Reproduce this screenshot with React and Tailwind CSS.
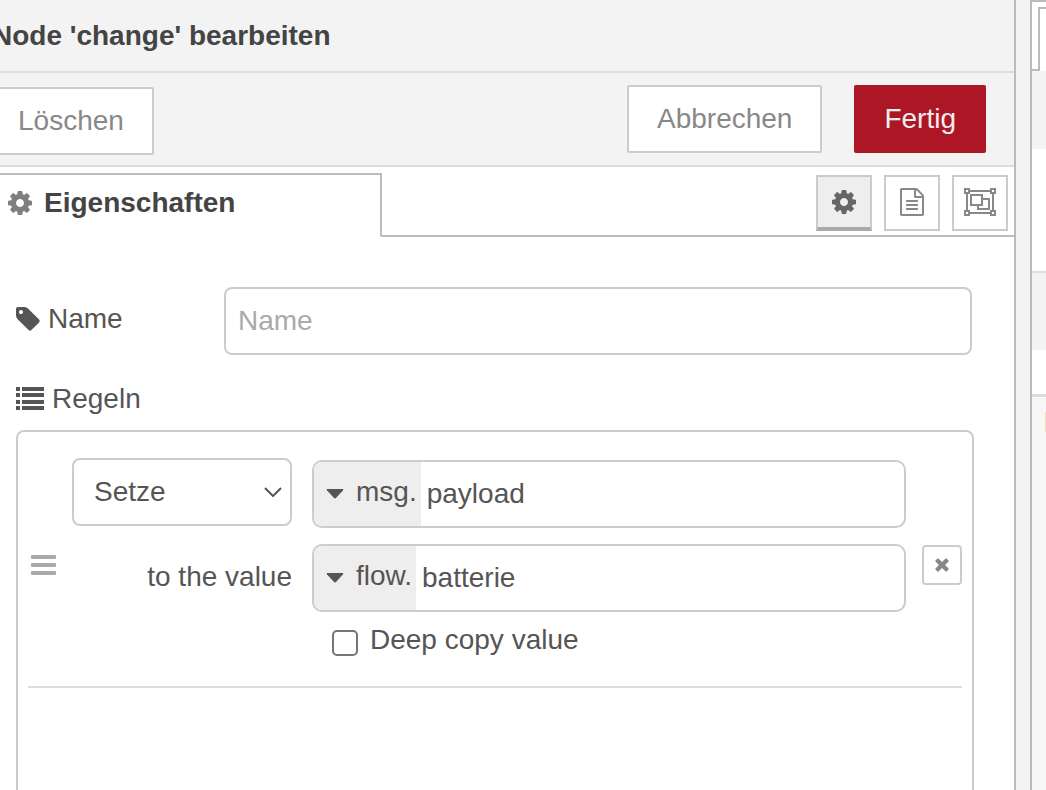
import { useState } from 'react'

const ICONS = {
  cog: {
    viewBox: '128 128 1536 1536',
    d: 'M1152 896q0-106-75-181t-181-75-181 75-75 181 75 181 181 75 181-75 75-181zm512-109v222q0 12-8 23t-20 13l-185 28q-19 54-39 91 35 50 107 138 10 12 10 25t-9 23q-27 37-99 108t-94 71q-12 0-26-9l-138-108q-44 23-91 38-16 136-29 186-7 28-36 28h-222q-14 0-24.5-8.5t-11.5-21.5l-28-184q-49-16-90-37l-141 107q-10 9-25 9-14 0-25-11-126-114-165-168-7-10-7-23 0-12 8-23 15-21 51-66.5t54-70.5q-27-50-41-99l-183-27q-13-2-21-12.5t-8-23.5v-222q0-12 8-23t19-13l186-28q14-46 39-92-40-57-107-138-10-12-10-24 0-10 9-23 26-36 98.5-107.5t94.5-71.5q13 0 26 10l138 107q44-23 91-38 16-136 29-186 7-28 36-28h222q14 0 24.5 8.5t11.5 21.5l28 184q49 16 90 37l142-107q9-9 24-9 13 0 25 10 129 119 165 170 7 8 7 22 0 12-8 23-15 21-51 66.5t-54 70.5q26 50 41 98l183 28q13 2 21 12.5t8 23.5z',
  },
  tag: {
    viewBox: '128 128 1536 1536',
    d: 'M576 448q0-53-37.5-90.5t-90.5-37.5-90.5 37.5-37.5 90.5 37.5 90.5 90.5 37.5 90.5-37.5 37.5-90.5zm1067 576q0 53-37 90l-491 492q-39 37-91 37-53 0-90-37l-715-716q-38-37-64.5-101t-26.5-117v-416q0-52 38-90t90-38h416q53 0 117 26.5t102 64.5l715 714q37 39 37 91z',
  },
  file: {
    viewBox: '0 0 1792 1792',
    d: 'M1596 380q28 28 48 76t20 88v1152q0 40-28 68t-68 28h-1344q-40 0-68-28t-28-68v-1600q0-40 28-68t68-28h896q40 0 88 20t76 48zm-444-244v376h376q-10-29-22-41l-313-313q-12-12-41-22zm384 1528v-1024h-416q-40 0-68-28t-28-68v-416h-768v1536h1280zm-1024-864q0-14 9-23t23-9h704q14 0 23 9t9 23v64q0 14-9 23t-23 9h-704q-14 0-23-9t-9-23v-64zm736 224q14 0 23 9t9 23v64q0 14-9 23t-23 9h-704q-14 0-23-9t-9-23v-64q0-14 9-23t23-9h704zm0 256q14 0 23 9t9 23v64q0 14-9 23t-23 9h-704q-14 0-23-9t-9-23v-64q0-14 9-23t23-9h704z',
  },
  times: {
    viewBox: '0 64 1792 1792',
    d: 'M1490 1322q0 40-28 68l-136 136q-28 28-68 28t-68-28l-294-294-294 294q-28 28-68 28t-68-28l-136-136q-28-28-28-68t28-68l294-294-294-294q-28-28-28-68t28-68l136-136q28-28 68-28t68 28l294 294 294-294q28-28 68-28t68 28l136 136q28 28 28 68t-28 68l-294 294 294 294q28 28 28 68z',
  },
}

function Icon({ name, className }) {
  return (
    <svg viewBox={ICONS[name].viewBox} className={className} fill="currentColor" aria-hidden="true">
      <path d={ICONS[name].d} />
    </svg>
  )
}

function ListIcon() {
  return (
    <svg viewBox="0 0 28 24" className="w-7 h-6" fill="currentColor" aria-hidden="true">
      {[0, 6, 13, 19].map(y => (
        <g key={y}>
          <rect x="0" y={y} width="4" height="4" />
          <rect x="6" y={y} width="22" height="4" />
        </g>
      ))}
    </svg>
  )
}

function GroupIcon() {
  return (
    <svg viewBox="0 0 32 28" className="w-8 h-7 shrink-0" fill="none" stroke="currentColor" strokeWidth="2" aria-hidden="true">
      <path d="M6 3h20M6 25h20M3 6v16M29 6v16" />
      <rect x="1" y="1" width="4" height="4" />
      <rect x="27" y="1" width="4" height="4" />
      <rect x="1" y="23" width="4" height="4" />
      <rect x="27" y="23" width="4" height="4" />
      <rect x="7" y="7" width="11" height="10" />
      <path d="M19 11h6v10H14v-4" />
    </svg>
  )
}

const TABS = [
  { id: 'properties', label: 'Eigenschaften', icon: <Icon name="cog" className="size-6" /> },
  { id: 'description', label: 'Beschreibung', icon: <Icon name="file" className="size-7" /> },
  { id: 'appearance', label: 'Darstellung', icon: <GroupIcon /> },
]

function TypedInput({ id, type, value, onChange }) {
  return (
    <div className="flex-1 min-w-0 h-[68px] flex border-2 border-[#ccc] rounded-[10px] overflow-hidden bg-white">
      <button type="button" className="flex items-center gap-3 pl-3 pr-1 bg-[#eee]">
        <svg viewBox="0 0 18 10" className="w-[18px] h-[10px]" fill="currentColor" aria-hidden="true">
          <path d="M1.300 0h15.400q1.200.2.4 1.300L10 9q-1 .9-2 0L.9 1.300Q.2.200 1.300 0z" />
        </svg>
        <span className="pb-1">{type}</span>
      </button>
      <input id={id} aria-label={type} value={value} onChange={onChange} className="flex-1 min-w-0 px-1.5 outline-none" />
    </div>
  )
}

function Rule() {
  const [target, setTarget] = useState('payload')
  const [source, setSource] = useState('batterie')

  return (
    <li className="flex items-center gap-4 pl-[3px] border-b-2 border-[#ddd]">
      {/* Drag handle */}
      <div className="w-[25px] flex flex-col gap-1 shrink-0 cursor-move">
        <div className="h-1 rounded-[1px] bg-[#aaa]" />
        <div className="h-1 rounded-[1px] bg-[#aaa]" />
        <div className="h-1 rounded-[1px] bg-[#aaa]" />
      </div>

      <div className="flex-1 min-w-0 pt-[14px] pb-[30px]">
        <div className="flex gap-5">
          <div className="relative w-[220px] h-[68px] shrink-0">
            <select aria-label="Aktion" className="w-full h-full appearance-none border-2 border-[#ccc] rounded-lg bg-white pl-5 pr-10 outline-none">
              <option>Setze</option>
            </select>
            <svg viewBox="0 0 18 10" className="absolute right-[10px] top-[29px] w-[18px] h-[10px] pointer-events-none" fill="none" stroke="currentColor" strokeWidth="2" aria-hidden="true">
              <path d="M1 1l8 8 8-8" />
            </svg>
          </div>
          <div className="flex-1 flex min-w-0 pt-0.5">
            <TypedInput id="rule-target" type="msg." value={target} onChange={e => setTarget(e.target.value)} />
          </div>
        </div>

        <div className="flex items-center gap-5 mt-4">
          <label htmlFor="rule-source" className="w-[220px] shrink-0 text-right pb-0.5">to the value</label>
          <TypedInput id="rule-source" type="flow." value={source} onChange={e => setSource(e.target.value)} />
        </div>

        <label className="flex items-end gap-3 ml-[260px] mt-3 h-8">
          <input type="checkbox" className="size-[26px] appearance-none border-2 border-[#767676] rounded-[5px] bg-white" />
          <span className="leading-8">Deep copy value</span>
        </label>
      </div>

      <button type="button" aria-label="Löschen" className="size-10 shrink-0 flex items-center justify-center border-2 border-[#ccc] rounded text-[#888]">
        <Icon name="times" className="size-5" />
      </button>
    </li>
  )
}

export default function App() {
  const [name, setName] = useState('')

  return (
    <div className="flex h-screen overflow-hidden bg-white text-[28px] leading-8 text-[#555] font-['Liberation_Sans',Arial,sans-serif]">
      {/* Edit tray */}
      <div className="flex-1 min-w-0 -ml-3 border-r-2 border-[#bbb]">
        <header className="flex items-center h-[73px] pl-1 bg-[#f3f3f3] border-b-2 border-[#ddd]">
          <h1 className="font-bold text-[#444]">Node 'change' bearbeiten</h1>
        </header>

        <div className="flex items-start h-[94px] pt-3 pr-7 bg-[#f3f3f3] border-b-2 border-[#ddd]">
          <button type="button" className="h-[68px] mt-0.5 px-7 border-2 border-[#ccc] rounded-xs bg-white text-[#888]">Löschen</button>
          <button type="button" className="h-[68px] ml-auto px-7 border-2 border-[#ccc] rounded-xs bg-white text-[#888]">Abbrechen</button>
          <button type="button" className="h-[68px] ml-8 px-[30px] rounded-xs bg-[#ad1625] text-[#eee]">Fertig</button>
        </div>

        {/* Tabs */}
        <div className="flex h-[70px] pt-1.5">
          <div className="w-[394px] border-t-2 border-r-2 border-[#bbb] rounded-br-xs">
            <div className="flex items-center gap-3 h-14 pl-5">
              <Icon name="cog" className="size-6 text-[#7f7f7f]" />
              <span className="font-bold text-[#444]">{TABS[0].label}</span>
            </div>
          </div>
          <div className="flex-1 flex justify-end gap-3 pt-0.5 pr-1.5 border-b-2 border-[#bbb]">
            {TABS.map((tab, i) => (
              <button
                key={tab.id}
                type="button"
                aria-label={tab.label}
                className={i === 0
                  ? 'size-14 flex items-center justify-center border-2 border-b-4 border-[#ccc] border-b-[#aaa] bg-[#eee] text-[#666]'
                  : 'size-14 flex items-center justify-center pb-0.5 border-2 border-[#ccc] bg-white text-[#888]'}
              >
                {tab.icon}
              </button>
            ))}
          </div>
        </div>

        {/* Form */}
        <div className="pl-7 pr-10 pt-[50px]">
          <div className="flex items-center pr-0.5">
            <label htmlFor="node-name" className="w-[208px] flex items-center gap-2 pb-1">
              <Icon name="tag" className="size-6" />
              Name
            </label>
            <input
              id="node-name"
              placeholder="Name"
              value={name}
              onChange={e => setName(e.target.value)}
              className="flex-1 min-w-0 h-[68px] px-3 border-2 border-[#ccc] rounded-lg bg-white outline-none placeholder:text-[#aaa]"
            />
          </div>

          <div className="flex items-center gap-2 mt-7">
            <ListIcon />
            Regeln
          </div>

          <ol className="mt-[15px] min-h-[400px] px-[10px] pt-3 border-2 border-[#ccc] rounded-lg">
            <Rule />
          </ol>
        </div>
      </div>

      {/* Separator */}
      <div className="w-[14px] shrink-0 bg-[#f3f3f3]" />

      {/* Sidebar edge */}
      <div className="w-4 shrink-0 flex flex-col border-l-2 border-t-2 border-[#bbb] overflow-hidden">
        <div className="flex h-[69px]">
          <div className="w-1.5 border-b-2 border-[#bbb]" />
          <div className="flex-1 mt-[5px] border-l-2 border-t-2 border-[#bbb]" />
        </div>
        <div className="h-[78px] bg-[#f3f3f3]" />
        <div className="h-[122px]" />
        <div className="h-[79px] bg-[#f3f3f3] border-t-2 border-[#ddd]" />
        <div className="h-11" />
        <div className="flex-1 pt-[15px] bg-[#f7f7f7] border-t-3 border-[#ddd]">
          <div className="ml-auto w-px h-5 bg-[#f3dfae]" />
        </div>
      </div>
    </div>
  )
}
